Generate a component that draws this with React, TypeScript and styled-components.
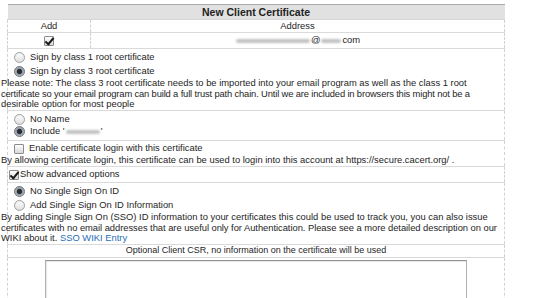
import React from 'react';
import styled, { createGlobalStyle } from 'styled-components';

// New client certificate form
const App: React.FC = () => {
  return (
    <>
      <GlobalStyle />
      <Page>
        <FormTable>
          <colgroup>
            <Col $w={83} />
            <Col $w={414} />
          </colgroup>
          <tbody>
            <tr>
              <HeaderCell colSpan={2}>New Client Certificate</HeaderCell>
            </tr>
            <tr>
              <Cell $center $h={12}>Add</Cell>
              <Cell $center $h={12}>Address</Cell>
            </tr>
            <tr>
              <Cell $center $h={15}>
                <Check type="checkbox" defaultChecked $gap={0} />
              </Cell>
              <Cell $center $h={15}>
                <Redacted $w={74} />@<Redacted $w={20} />com
              </Cell>
            </tr>
            <tr>
              <Cell colSpan={2} $pad="1px 0 0">
                <Option $h={14}>
                  <Radio type="radio" name="root" />
                  Sign by class 1 root certificate
                </Option>
                <Option $h={14}>
                  <Radio type="radio" name="root" defaultChecked />
                  Sign by class 3 root certificate
                </Option>
                <Note>
                  <NoteLine>
                    Please note: The class 3 root certificate needs to be imported into your email program as well as the class 1 root
                  </NoteLine>
                  <NoteLine $tight={0.15}>
                    certificate so your email program can build a full trust path chain. Until we are included in browsers this might not be a
                  </NoteLine>
                  <NoteLine>desirable option for most people</NoteLine>
                </Note>
              </Cell>
            </tr>
            <tr>
              <Cell colSpan={2} $pad="3px 0 2px">
                <Option $h={12}>
                  <Radio type="radio" name="cn" />
                  No Name
                </Option>
                <Option $h={12}>
                  <Radio type="radio" name="cn" defaultChecked />
                  Include '<Redacted $w={34} />'
                </Option>
              </Cell>
            </tr>
            <tr>
              <Cell colSpan={2} $pad="2px 0 1px">
                <Option $h={12}>
                  <Check type="checkbox" />
                  Enable certificate login with this certificate
                </Option>
                <Note>
                  <NoteLine>
                    By allowing certificate login, this certificate can be used to login into this account at https://secure.cacert.org/ .
                  </NoteLine>
                </Note>
              </Cell>
            </tr>
            <tr>
              <Cell colSpan={2}>
                <Option $h={15} $indent={1}>
                  <Check type="checkbox" defaultChecked $gap={1} />
                  Show advanced options
                </Option>
              </Cell>
            </tr>
            <tr>
              <Cell colSpan={2} $pad="1px 0 0">
                <Option $h={14}>
                  <Radio type="radio" name="sso" defaultChecked />
                  No Single Sign On ID
                </Option>
                <Option $h={14}>
                  <Radio type="radio" name="sso" />
                  Add Single Sign On ID Information
                </Option>
                <Note>
                  <NoteLine>
                    By adding Single Sign On (SSO) ID information to your certificates this could be used to track you, you can also issue
                  </NoteLine>
                  <NoteLine $tight={0.04}>
                    certificates with no email addresses that are useful only for Authentication. Please see a more detailed description on our
                  </NoteLine>
                  <NoteLine>
                    WIKI about it. <WikiLink href="#">SSO WIKI Entry</WikiLink>
                  </NoteLine>
                </Note>
              </Cell>
            </tr>
            <tr>
              <Cell colSpan={2} $center $h={12} $size={9}>
                Optional Client CSR, no information on the certificate will be used
              </Cell>
            </tr>
            <tr>
              <Cell colSpan={2} $center $pad="2px 0 0" $open>
                <CsrInput />
              </Cell>
            </tr>
          </tbody>
        </FormTable>
      </Page>
    </>
  );
};

export default App;

// Styled components

const GlobalStyle = createGlobalStyle`
  html, body {
    margin: 0;
    background: #fff;
    overflow: hidden;
  }
  body {
    font-family: "Liberation Sans", Arial, sans-serif;
    color: #1e1e1e;
  }
`;

const Page = styled.div`
  padding: 4px 0 0 7px;
  width: 497px;
`;

const FormTable = styled.table`
  width: 497px;
  border-collapse: collapse;
  table-layout: fixed;
  font-size: 9.4px;
  line-height: 10.5px;
`;

const Col = styled.col<{ $w: number }>`
  width: ${(p) => p.$w}px;
`;

const HeaderCell = styled.th`
  height: 14px;
  padding: 0;
  background: #e1e1e1;
  border-top: 1px solid #a9a9a9;
  border-bottom: 1px solid #d6d6d6;
  font-weight: bold;
  font-size: 10.5px;
  text-align: center;
  vertical-align: middle;
  color: #222;
`;

const Cell = styled.td<{ $center?: boolean; $h?: number; $pad?: string; $open?: boolean; $size?: number }>`
  height: ${(p) => (p.$h ? `${p.$h}px` : 'auto')};
  padding: ${(p) => p.$pad ?? '0'};
  border-left: 1px dashed #d2d2d2;
  border-right: 1px dashed #d2d2d2;
  border-bottom: ${(p) => (p.$open ? 'none' : '1px solid #dadada')};
  text-align: ${(p) => (p.$center ? 'center' : 'left')};
  vertical-align: ${(p) => (p.$center ? 'middle' : 'top')};
  font-size: ${(p) => (p.$size ? `${p.$size}px` : 'inherit')};
  white-space: nowrap;
`;

const Option = styled.label<{ $h: number; $indent?: number }>`
  display: flex;
  align-items: center;
  height: ${(p) => p.$h}px;
  padding-left: ${(p) => p.$indent ?? 6}px;
`;

const Radio = styled.input`
  appearance: none;
  width: 11px;
  height: 11px;
  margin: 0 5px 0 0;
  border-radius: 50%;
  border: 1px solid #a0a0a0;
  background: linear-gradient(#ffffff, #dedede);
  box-shadow: inset 0 1px 1px rgba(0, 0, 0, 0.06);
  flex: none;

  &:checked {
    border-color: #707780;
    background: radial-gradient(circle, #2a2d31 0 2.2px, #8f98a3 2.9px, #d3d8de 100%);
  }
`;

const Check = styled.input<{ $gap?: number }>`
  appearance: none;
  position: relative;
  width: 10px;
  height: 10px;
  margin: 0 ${(p) => p.$gap ?? 5}px 0 0;
  border: 1px solid #8c8c8c;
  border-radius: 1px;
  background: linear-gradient(#ffffff, #d8d8d8);
  flex: none;
  vertical-align: middle;

  &:checked::after {
    content: '';
    position: absolute;
    left: 2px;
    top: -1px;
    width: 3px;
    height: 7px;
    border: solid #1a1a1a;
    border-width: 0 2px 2px 0;
    transform: rotate(40deg);
  }
`;

const Redacted = styled.span<{ $w: number }>`
  display: inline-block;
  width: ${(p) => p.$w}px;
  height: 4px;
  margin: 0 1px;
  vertical-align: middle;
  background: #c2c2c2;
  border-radius: 2px;
  filter: blur(1px);
`;

const Note = styled.div`
  margin-left: -7px;
  line-height: 10.5px;
`;

const NoteLine = styled.div<{ $tight?: number }>`
  letter-spacing: ${(p) => (p.$tight ? `-${p.$tight}px` : 'normal')};
`;

const WikiLink = styled.a`
  color: #1f6fb6;
  text-decoration: none;
`;

const CsrInput = styled.textarea`
  display: block;
  margin: 0 auto;
  width: 422px;
  height: 90px;
  box-sizing: border-box;
  border: 1px solid #b0b0b0;
  border-top-color: #929292;
  box-shadow: inset 1px 1px 1px rgba(0, 0, 0, 0.1);
  resize: none;
  font-family: "Liberation Mono", monospace;
`;
